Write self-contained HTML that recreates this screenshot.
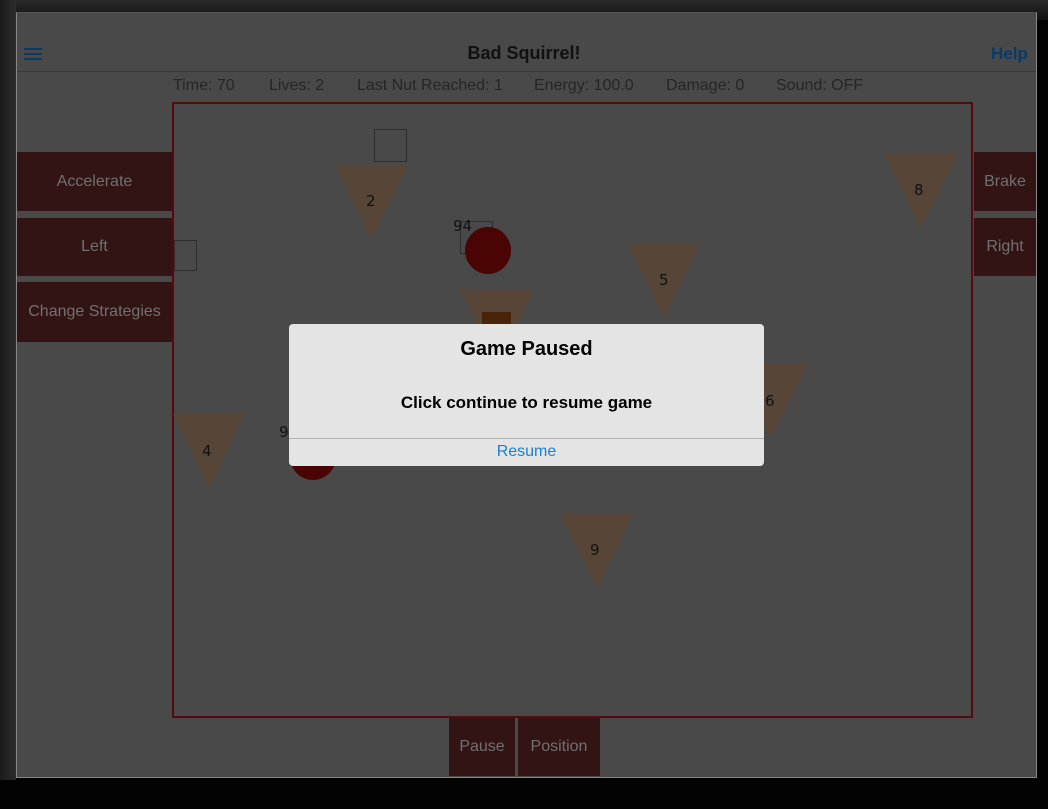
<!DOCTYPE html>
<html><head><style>
*{margin:0;padding:0;box-sizing:border-box}
body{width:1048px;height:809px;background:#030303;position:relative;overflow:hidden;font-family:"Liberation Sans",sans-serif}
.bgtop{position:absolute;left:0;top:0;width:1048px;height:20px;background:linear-gradient(#2a2a2a,#111)}
.bgl{position:absolute;left:0;top:0;width:16px;height:780px;background:linear-gradient(90deg,#1a1a1a,#2c2c2c)}
#p{position:absolute;left:16px;top:12px;width:1021px;height:766px;background:#494949;border:1px solid #888;border-top-color:#555}
.a{position:absolute}
.btn{position:absolute;background:#331414;color:#707070;font-size:16px;display:flex;align-items:center;justify-content:center}
.tri{position:absolute;width:0;height:0;border-top:74px solid #574638}
.lbl{position:absolute;font-size:15px;color:#111;font-family:"DejaVu Sans",sans-serif}
.sq{position:absolute;border:1px solid #2e2e2e}
.st{position:absolute;top:77px;font-size:16px;color:#262626}
</style></head><body>
<div class="bgtop"></div><div class="bgl"></div>
<div id="p"></div>
<div class="a" style="left:24px;top:48px;width:18px;height:2px;background:#0a3a66;box-shadow:0 5px 0 #0a3a66,0 10px 0 #0a3a66"></div>
<div class="a" style="left:0;width:1048px;top:43px;text-align:center;font-size:18px;font-weight:bold;color:#111">Bad Squirrel!</div>
<div class="a" style="left:991px;top:44px;font-size:17px;font-weight:bold;color:#0a3a66">Help</div>
<div class="a" style="left:17px;top:71px;width:1019px;height:1px;background:#3a3a3a"></div>
<div class="st" style="left:173px">Time: 70</div>
<div class="st" style="left:269px">Lives: 2</div>
<div class="st" style="left:357px">Last Nut Reached: 1</div>
<div class="st" style="left:534px">Energy: 100.0</div>
<div class="st" style="left:666px">Damage: 0</div>
<div class="st" style="left:776px">Sound: OFF</div>
<div class="a" style="left:172px;top:102px;width:801px;height:616px;border:2px solid #550a10"></div>
<div class="btn" style="left:17px;top:152px;width:155px;height:59px">Accelerate</div>
<div class="btn" style="left:17px;top:218px;width:155px;height:58px">Left</div>
<div class="btn" style="left:17px;top:282px;width:155px;height:60px">Change Strategies</div>
<div class="btn" style="left:974px;top:152px;width:62px;height:59px">Brake</div>
<div class="btn" style="left:974px;top:218px;width:62px;height:58px">Right</div>
<div class="btn" style="left:449px;top:718px;width:66px;height:58px">Pause</div>
<div class="btn" style="left:518px;top:718px;width:82px;height:58px">Position</div>
<div class="sq" style="left:374px;top:129px;width:33px;height:33px"></div>
<div class="sq" style="left:174px;top:240px;width:23px;height:31px"></div>
<div class="sq" style="left:460px;top:221px;width:33px;height:33px"></div>
<div class="tri" style="left:335px;top:165px;border-left:37px solid transparent;border-right:37px solid transparent"></div>
<div class="lbl" style="left:366px;top:192px">2</div>
<div class="tri" style="left:884px;top:154px;border-left:37px solid transparent;border-right:37px solid transparent"></div>
<div class="lbl" style="left:914px;top:181px">8</div>
<div class="tri" style="left:627px;top:243px;border-left:37px solid transparent;border-right:37px solid transparent"></div>
<div class="lbl" style="left:659px;top:271px">5</div>
<div class="tri" style="left:460px;top:290px;border-left:37px solid transparent;border-right:37px solid transparent"></div>
<div class="a" style="left:482px;top:312px;width:29px;height:20px;background:#4a2408"></div>
<div class="tri" style="left:734px;top:364px;border-left:37px solid transparent;border-right:37px solid transparent"></div>
<div class="lbl" style="left:765px;top:392px">6</div>
<div class="tri" style="left:173px;top:414px;border-left:36px solid transparent;border-right:36px solid transparent"></div>
<div class="lbl" style="left:202px;top:442px">4</div>
<div class="tri" style="left:560px;top:514px;border-left:37px solid transparent;border-right:37px solid transparent"></div>
<div class="lbl" style="left:590px;top:541px">9</div>
<div class="a" style="left:465px;top:227px;width:46px;height:47px;border-radius:50%;background:#4a0404"></div>
<div class="lbl" style="left:453px;top:217px">94</div>
<div class="a" style="left:290px;top:434px;width:46px;height:46px;border-radius:50%;background:#4a0404"></div>
<div class="lbl" style="left:279px;top:423px">9</div>
<div class="a" style="left:289px;top:324px;width:475px;height:142px;background:#e4e4e4;border-radius:4px"></div>
<div class="a" style="left:289px;width:475px;top:338px;text-align:center;font-size:20px;font-weight:bold;color:#000">Game Paused</div>
<div class="a" style="left:289px;width:475px;top:393px;text-align:center;font-size:17px;font-weight:bold;color:#000">Click continue to resume game</div>
<div class="a" style="left:289px;width:475px;top:438px;height:1px;background:#b0b0b0"></div>
<div class="a" style="left:289px;width:475px;top:443px;text-align:center;font-size:16px;color:#1a7fd4">Resume</div>
</body></html>
